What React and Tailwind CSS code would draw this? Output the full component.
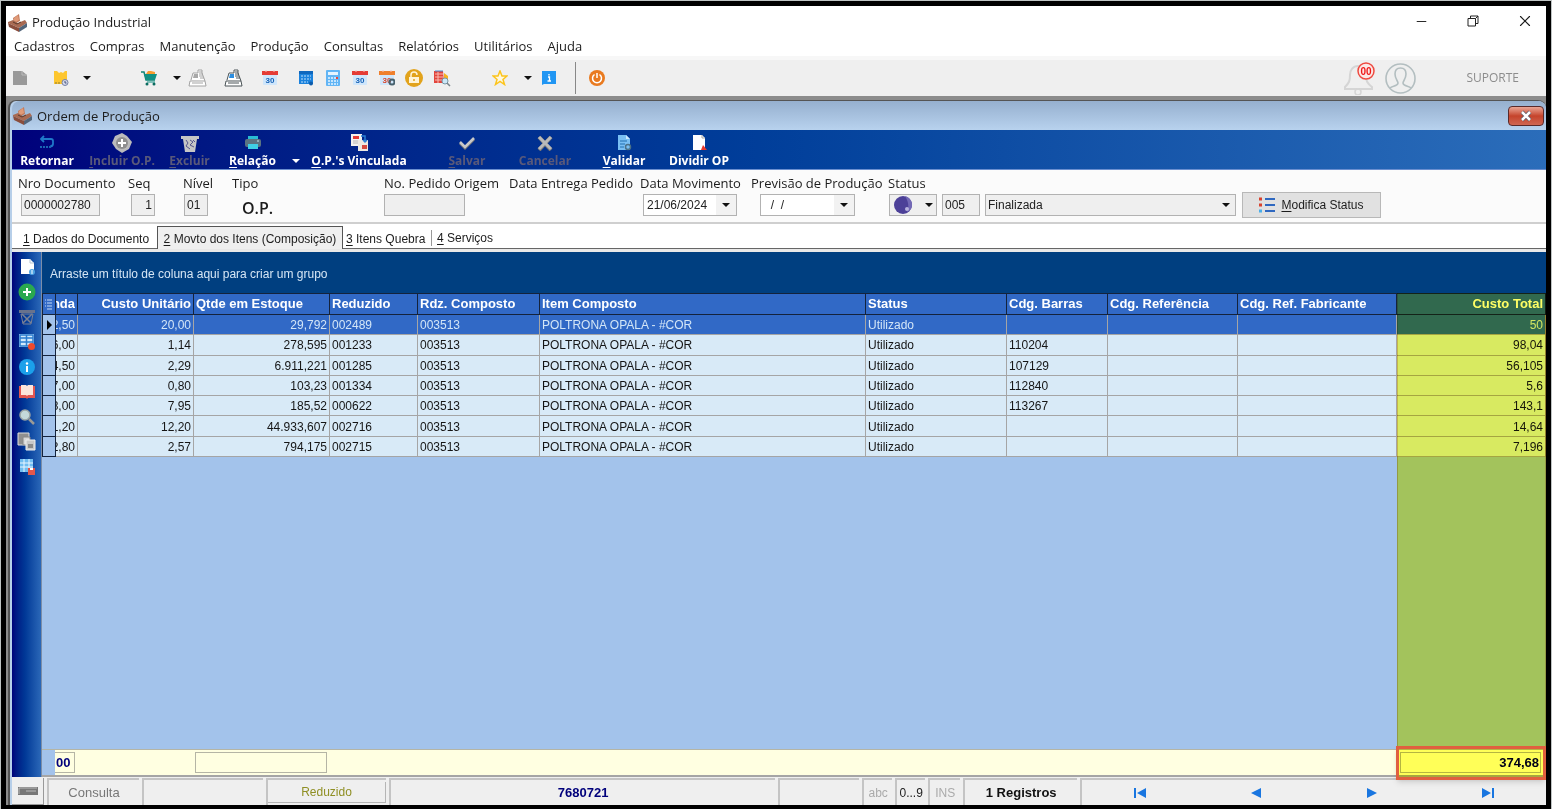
import React from 'react';
import { Minus, X } from 'lucide-react';

const columns = [
    { key: 'qtd', label: 'nda', width: 'w-[22px]', right: true, pad: 'pl-0 pr-[2px]' },
    { key: 'unit', label: 'Custo Unitário', width: 'w-[116px]', right: true },
    { key: 'stock', label: 'Qtde em Estoque', width: 'w-[136px]', right: true, labelLeft: true },
    { key: 'code', label: 'Reduzido', width: 'w-[88px]' },
    { key: 'parent', label: 'Rdz. Composto', width: 'w-[122px]' },
    { key: 'item', label: 'Item Composto', width: '' },
    { key: 'status', label: 'Status', width: 'w-[141px]' },
    { key: 'barcode', label: 'Cdg. Barras', width: 'w-[101px]' },
    { key: 'ref', label: 'Cdg. Referência', width: 'w-[130px]' },
    { key: 'maker', label: 'Cdg. Ref. Fabricante', width: 'w-[159px]' },
    { key: 'total', label: 'Custo Total', width: 'w-[149px]', right: true },
];

const base = { parent: '003513', item: 'POLTRONA OPALA - #COR', status: 'Utilizado' };

const rows = [
    { ...base, qtd: '2,50', unit: '20,00', stock: '29,792', code: '002489', total: '50' },
    { ...base, qtd: '6,00', unit: '1,14', stock: '278,595', code: '001233', barcode: '110204', total: '98,04' },
    { ...base, qtd: '4,50', unit: '2,29', stock: '6.911,221', code: '001285', barcode: '107129', total: '56,105' },
    { ...base, qtd: '7,00', unit: '0,80', stock: '103,23', code: '001334', barcode: '112840', total: '5,6' },
    { ...base, qtd: '8,00', unit: '7,95', stock: '185,52', code: '000622', barcode: '113267', total: '143,1' },
    { ...base, qtd: '1,20', unit: '12,20', stock: '44.933,607', code: '002716', total: '14,64' },
    { ...base, qtd: '2,80', unit: '2,57', stock: '794,175', code: '002715', total: '7,196' },
];

const menus = ['Cadastros', 'Compras', 'Manutenção', 'Produção', 'Consultas', 'Relatórios', 'Utilitários', 'Ajuda'];

function Svg({ size = 'w-4 h-4', box = '0 0 16 16', children }) {
    return (
        <svg className={`${size} shrink-0`} viewBox={box} fill="none" aria-hidden="true">
            {children}
        </svg>
    );
}

function Caret({ color = '#111' }) {
    return (
        <Svg size="w-2 h-2" box="0 0 8 8">
            <path d="M0 2h8L4 6z" fill={color} />
        </Svg>
    );
}

function AppIcon() {
    return (
        <Svg size="w-[19px] h-[18px]" box="0 0 19 18">
            <path d="M5 4l6-4 1 7-6 3z" fill="#c07a5c" />
            <path d="M6 4l4-3 1 5-5 3z" fill="#e09a78" />
            <path d="M0 8l5-2 5 3 7-3 2 3-8 5L0 9z" fill="#a96a52" />
            <path d="M0 9l11 5v4L1 13z" fill="#8a4d3c" />
            <path d="M11 14l8-5v4l-8 5z" fill="#52657a" />
            <path d="M5 8l4 2 4-2" stroke="#5c3a2e" />
        </Svg>
    );
}

function CalendarIcon({ top = '#e53c35', gear }) {
    return (
        <Svg size="w-4 h-4">
            <rect x="1" y="1" width="14" height="14" rx="1" fill="#cfe6fb" />
            <path d="M0 1h16v4H0z" fill={top} />
            <path d="M4 0v2M12 0v2" stroke="#f7c4be" />
            <text x="8" y="13" textAnchor="middle" fontSize="8" fontWeight="bold" fontFamily="Liberation Sans, sans-serif" fill={gear ? '#d8452c' : '#1763b8'}>30</text>
            {gear && <circle cx="13" cy="12" r="2.5" stroke="#48626e" strokeWidth="2" />}
        </Svg>
    );
}

function ScannerIcon({ line, fill }) {
    return (
        <Svg size="w-[19px] h-[18px]" box="0 0 19 18">
            <path d="M3 11L5 4h5V1h4v3l3 8" fill="#fff" stroke={line} />
            <path d="M6 5h4v4H5z" fill={fill} />
            <path d="M11 3h3M11 5h4M11 7h4M12 9h4" stroke={line} />
            <path d="M2 12h15l1 5H1z" fill="#fff" stroke={line} />
            <path d="M4 14h11" stroke={line} />
        </Svg>
    );
}

const mainTools = [
    {
        name: 'Documento', place: 'w-4',
        icon: <Svg><path d="M1 1h9l5 4v10H1z" fill="#999" /><path d="M10 1v4h5" stroke="#bbb" /></Svg>,
    },
    {
        name: 'Cadastro rápido', place: 'ml-[25px] w-4',
        icon: (
            <Svg>
                <path d="M1 1h3l2 2 2-1 2 1 2-2h2v13H1z" fill="#fdc62f" />
                <path d="M3 12v2M6 12v2" stroke="#8d7a35" />
                <circle cx="12" cy="12.500" r="3" fill="#d4d9ea" stroke="#7781a5" />
                <path d="M12 11v2h1.500" stroke="#47527d" />
            </Svg>
        ),
    },
    { name: 'Mais cadastros', place: 'ml-[14px] w-2', icon: <Caret /> },
    {
        name: 'Compras', place: 'ml-[50px] w-4',
        icon: (
            <Svg>
                <path d="M5 4l2-3h3l4 1v3H6z" fill="#f79b2e" />
                <path d="M0 2h3l2 8h9" stroke="#0e8577" strokeWidth="1.500" />
                <path d="M3 4h13l-2 6H5z" fill="#119184" />
                <path d="M6 12h8" stroke="#119184" />
                <circle cx="6" cy="14" r="1.500" fill="#0b6b60" /><circle cx="13" cy="14" r="1.500" fill="#0b6b60" />
            </Svg>
        ),
    },
    { name: 'Mais compras', place: 'ml-[16px] w-2', icon: <Caret /> },
    { name: 'Leitor', place: 'ml-[7px] w-[19px]', icon: <ScannerIcon line="#a3a3a3" fill="#a9a9a9" /> },
    { name: 'Leitor ativo', place: 'ml-[17px] w-[19px]', icon: <ScannerIcon line="#4c5558" fill="#2b8de0" /> },
    { name: 'Agenda', place: 'ml-[19px] w-4', icon: <CalendarIcon /> },
    {
        name: 'Programação', place: 'ml-[20px] w-4',
        icon: (
            <Svg>
                <path d="M1 1h14v13H1z" fill="#1b82dd" />
                <path d="M1 1h14v3H1z" fill="#0f67bd" />
                <path d="M3 6h10M3 9h10M3 12h7" stroke="#bfe0fb" strokeDasharray="2 1" />
                <circle cx="13" cy="13.500" r="2" fill="#0d5cab" />
            </Svg>
        ),
    },
    {
        name: 'Calculadora', place: 'ml-[11px] w-4',
        icon: (
            <Svg>
                <rect x="1" width="14" height="16" rx="1" fill="#62b5f5" />
                <path d="M3 2h10v3H3z" fill="#e5f4ff" />
                <path d="M3 8h10M3 11h10M3 14h10" stroke="#e5f4ff" strokeWidth="1.500" strokeDasharray="2 1" />
                <path d="M12 7v2" stroke="#e7483d" strokeWidth="2" />
            </Svg>
        ),
    },
    { name: 'Calendário', place: 'ml-[11px] w-4', icon: <CalendarIcon /> },
    { name: 'Configurar calendário', place: 'ml-[11px] w-4', icon: <CalendarIcon top="#ef7f2c" gear /> },
    {
        name: 'Bloqueio', place: 'ml-[10px] w-[18px]',
        icon: (
            <Svg size="w-[18px] h-[18px]" box="0 0 18 18">
                <circle cx="9" cy="9" r="9" fill="#e2a31c" />
                <path d="M4 8h10v6H4z" fill="#fff4d6" />
                <path d="M6 8V6a3 3 0 0 1 6 0" stroke="#fff4d6" strokeWidth="1.500" />
                <path d="M9 10v2" stroke="#e2a31c" strokeWidth="1.500" />
            </Svg>
        ),
    },
    {
        name: 'Pesquisar lista', place: 'ml-[11px] w-[17px]',
        icon: (
            <Svg size="w-[17px] h-[17px]" box="0 0 17 17">
                <path d="M0 1h9l1 12H0z" fill="#e2443c" />
                <path d="M1 1h8" stroke="#4a8ed2" />
                <path d="M1 4h8M1 7h8M1 10h8M4 2v11" stroke="#f9b9b0" />
                <path d="M10 3l4 3v4h-4z" fill="#f6b320" />
                <circle cx="11" cy="11" r="3" fill="#cbe7f7" stroke="#7895a5" />
                <path d="M13 13l3 3" stroke="#79838a" strokeWidth="1.500" />
            </Svg>
        ),
    },
    {
        name: 'Favoritos', place: 'ml-[41px] w-4',
        icon: <Svg><path d="M8 1l2 5h5l-4 3.500 1.500 5L8 11.500 3.500 14.500 5 9.500 1 6h5z" stroke="#fcc41c" strokeWidth="1.500" fill="#fff8df" /></Svg>,
    },
    { name: 'Mais favoritos', place: 'ml-[16px] w-2', icon: <Caret /> },
    {
        name: 'Informações', place: 'ml-[9px] w-4',
        icon: <Svg><path d="M1 1h14v13H3l-2 1z" fill="#2196f3" /><path d="M8 4v1.500M7 7h1.500v4M6.500 11h3.500" stroke="#fff" strokeWidth="1.300" /></Svg>,
    },
];

const orderTools = [
    {
        label: 'Retornar', place: 'w-[70px]',
        icon: <Svg><path d="M5 1L2 4l3 3M2 4h10a2 2 0 0 1 2 2v3a3 3 0 0 1-3 2.500" stroke="#1f79c9" strokeWidth="1.800" /><path d="M1 12h11" stroke="#1a66b4" strokeWidth="2" strokeDasharray="2 1" /></Svg>,
    },
    {
        label: 'Incluir O.P.', hot: true, off: true, place: 'w-[80px]',
        icon: <Svg size="w-5 h-5" box="0 0 20 20"><path d="M10 0l5 3 5 6-3 7-7 4-6-4-4-6 3-7z" fill="#bcbcbc" /><circle cx="10" cy="10" r="6" fill="#8f8f8f" /><path d="M10 6v8M6 10h8" stroke="#fff" strokeWidth="2" /></Svg>,
    },
    {
        label: 'Excluir', hot: true, off: true, place: 'w-[55px]',
        icon: <Svg size="w-[18px] h-[17px]" box="0 0 18 17"><path d="M0 1h18v3H0zM2 4h14l-2 13H4z" fill="#c6c6c6" /><path d="M5 5l2 3-2 3 4 3M9 5l3 2-3 3 4 2M12 5l2 2" stroke="#55558c" /></Svg>,
    },
    {
        label: 'Relação', hot: true, place: 'w-[71px]',
        icon: <Svg><path d="M3 1h10v4H3z" fill="#29bcd4" /><rect y="4" width="16" height="8" rx="2" fill="#5b7482" /><path d="M3 9h10v5H3z" fill="#3fd0e6" /><path d="M12 6h2" stroke="#c7e8ef" /></Svg>,
    },
    { label: '', name: 'Opções de relação', place: 'w-[16px]', icon: null },
    {
        label: "O.P.'s Vinculada", hot: true, place: 'w-[110px]',
        icon: (
            <Svg size="w-[19px] h-[18px]" box="0 0 19 18">
                <path d="M1 0h11v12H1z" fill="#f3f1ef" /><path d="M3 2h6v3H3z" fill="#e53b36" /><path d="M3 7h5M3 9h5" stroke="#b4b4b4" />
                <path d="M8 6h10v11H8z" fill="#ece8e2" /><path d="M12 11h5v4h-5z" fill="#d34a40" /><path d="M11 2h4v6M13 6l2 2 2-2" stroke="#2b7fd4" strokeWidth="1.500" />
            </Svg>
        ),
    },
    {
        label: 'Salvar', hot: true, off: true, place: 'ml-[18px] w-[70px]',
        icon: <Svg><path d="M1 8l5 5 9-9" stroke="#777" strokeWidth="3" /><path d="M1 7l5 5 9-9" stroke="#c9c9c9" strokeWidth="2.500" /></Svg>,
    },
    {
        label: 'Cancelar', off: true, place: 'w-[86px]',
        icon: <Svg><path d="M2 2l12 13M14 2L2 15" stroke="#777" strokeWidth="4" /><path d="M2 2l12 12M14 2L2 14" stroke="#bababa" strokeWidth="3" /></Svg>,
    },
    {
        label: 'Validar', hot: true, place: 'w-[72px]',
        icon: <Svg><path d="M2 0h8l4 4v11H2z" fill="#79bff3" /><path d="M10 0v4h4" fill="#c9e8ff" /><path d="M4 6h7M4 9h5M4 12h4" stroke="#236fae" /><circle cx="12" cy="12" r="2.500" stroke="#4b7187" strokeWidth="1.500" /></Svg>,
    },
    {
        label: 'Dividir OP', place: 'w-[78px]',
        icon: <Svg><path d="M2 0h9l3 3v12H2z" fill="#fff" /><path d="M11 0v3h3" stroke="#aaa" /><path d="M12 10l4 5h-6z" fill="#e8392f" /></Svg>,
    },
];

const sideTools = [
    { name: 'Novo', icon: <Svg><path d="M2 0h9l4 4v11H2z" fill="#fff" /><path d="M11 0v4h4" stroke="#b7c4d2" /><circle cx="13" cy="13" r="3" fill="#4ea3e3" /><path d="M13 11v4" stroke="#fff" /></Svg> },
    { name: 'Adicionar', icon: <Svg size="w-[18px] h-[18px]" box="0 0 18 18"><circle cx="9" cy="9" r="8.500" fill="#2aa84f" /><path d="M9 5v8M5 9h8" stroke="#fff" strokeWidth="2" /></Svg> },
    { name: 'Remover', icon: <Svg><path d="M0 1h16v3H0z" fill="#68728c" /><path d="M2 5h12l-2 10H4z" stroke="#7a8194" /><path d="M3 5l9 9M13 5l-9 9" stroke="#7a8194" strokeWidth="1.500" /></Svg> },
    { name: 'Excluir coluna', icon: <Svg><path d="M0 0h15v13H0z" fill="#d3eafb" /><path d="M1 1h13v11H1zM1 4h13M1 8h13M7.500 1v11" stroke="#2b7ed0" strokeWidth="1.500" /><circle cx="12.500" cy="12.500" r="3.500" fill="#ee4a2c" /></Svg> },
    { name: 'Informação', icon: <Svg><circle cx="8" cy="8" r="8" fill="#1ba0ea" /><circle cx="8" cy="4.500" r="1.200" fill="#fff" /><path d="M8 7v6" stroke="#fff" strokeWidth="2" /></Svg> },
    { name: 'Catálogo', icon: <Svg><path d="M0 2h16v12H9l-1 1-1-1H0z" fill="#e25550" /><path d="M2 1h5l1 1 1-1h5v10H9l-1 1-1-1H2z" fill="#fbe5dc" /></Svg> },
    { name: 'Localizar', icon: <Svg><circle cx="6" cy="6" r="5" fill="#c4d8da" stroke="#9aa3a4" strokeWidth="1.500" /><path d="M10 10l5 5" stroke="#9a9a96" strokeWidth="2.500" /></Svg> },
    { name: 'Copiar', icon: <Svg size="w-[19px] h-[19px]" box="0 0 19 19"><path d="M1 1h11v12H1z" fill="#8f8f8f" stroke="#ddd" /><path d="M6 5h7v8H6z" fill="#d7d7d7" stroke="#888" /><path d="M9 8h9v10H9z" fill="#c8c8c8" stroke="#eee" /><path d="M11 12h5v4h-5z" fill="#8b8b8b" /></Svg> },
    { name: 'Salvar grade', icon: <Svg><path d="M1 0h13v13H1z" fill="#6fbdf1" /><path d="M1 4h13M1 8h13M5 0v13M10 0v13" stroke="#e9f6ff" /><path d="M9 9h7v7H9z" fill="#e2574b" /><path d="M11 9h3v2h-3z" fill="#fff" /></Svg> },
];

// underlines the first letter as the keyboard shortcut
function Hot({ text }) {
    return <><u className="underline-offset-2">{text[0]}</u>{text.slice(1)}</>;
}

function TopBar() {
    return (
        <header>
            <div className="flex h-[30px] items-center bg-white">
                <div className="flex items-center gap-[5px] pl-[2px] pt-[3px]">
                    <AppIcon />
                    <h1 className="text-[13px]">Produção Industrial</h1>
                </div>
                <div className="ml-auto flex items-center gap-[34px] pr-[12px]">
                    <button aria-label="Minimizar" className="w-[18px] flex justify-center"><Minus size={15} strokeWidth={1.5} /></button>
                    <button aria-label="Restaurar" className="w-[18px] flex justify-center">
                        <Svg size="w-3 h-3" box="0 0 12 12"><path d="M1 3.500h7.500V11H1zM3.500 3V1H11v7.500H9M8.500 3.500L11 1" stroke="#222" /></Svg>
                    </button>
                    <button aria-label="Fechar" className="w-[18px] flex justify-center"><X size={18} strokeWidth={1.5} /></button>
                </div>
            </div>
            <nav className="flex h-5 items-start gap-[15px] bg-white pl-2 text-[13px] leading-5">
                {menus.map((menu) => <button key={menu}>{menu}</button>)}
            </nav>
            <div className="h-1 bg-[#f7f7f7]" />
            <div className="flex h-9 items-center bg-[#efefef] pl-[6px]">
                {mainTools.map((tool) => (
                    <button key={tool.name} aria-label={tool.name} className={`${tool.place} flex shrink-0 justify-center`}>
                        {tool.icon}
                    </button>
                ))}
                <div className="ml-[18px] h-8 w-px bg-[#888]" />
                <button aria-label="Sair" className="ml-[13px]">
                    <Svg><circle cx="8" cy="8" r="8" fill="#e97a1f" /><path d="M5.500 4.500a4.500 4.500 0 1 0 5 0M8 3v5" stroke="#fff" strokeWidth="1.500" /></Svg>
                </button>
                <button aria-label="Notificações" className="ml-auto">
                    <Svg size="w-8 h-[34px]" box="0 0 32 34">
                        <path d="M1 26c4-4 5-6 5-12 0-5 3-9 8-9s8 4 8 9c0 6 1 8 6 12v2H1z" stroke="#d5d5d5" strokeWidth="2" />
                        <circle cx="14" cy="31" r="3" stroke="#d5d5d5" strokeWidth="1.500" />
                        <circle cx="22" cy="10" r="8" fill="#fbe9e7" stroke="#ee4a40" strokeWidth="1.500" />
                        <text x="22" y="14" textAnchor="middle" fontSize="10" fontWeight="bold" fontFamily="Liberation Sans, sans-serif" fill="#f01818">00</text>
                    </Svg>
                </button>
                <button aria-label="Usuário" className="ml-[9px]">
                    <Svg size="w-[31px] h-[31px]" box="0 0 31 31">
                        <circle cx="15.500" cy="15.500" r="14.500" stroke="#b3bec0" strokeWidth="1.600" />
                        <path d="M5 25c2-2 8-2 8-5 0-2-3-4-3-9 0-4 2-6 5.500-6S21 7 21 11c0 5-3 7-3 9 0 3 6 3 8 5" stroke="#b3bec0" strokeWidth="1.600" />
                    </Svg>
                </button>
                <span className="ml-[50px] mr-[27px] text-[12px] text-[#8c8c8c]">SUPORTE</span>
            </div>
        </header>
    );
}

function OrderToolbar() {
    return (
        <div className="flex h-10 items-end border-b border-[#6b8fd0] bg-linear-to-r from-[#00007b] to-[#2b6dba] text-[12px] font-bold text-white">
            {orderTools.map((tool) => (
                <button
                    key={tool.label || tool.name}
                    aria-label={tool.name}
                    disabled={tool.off}
                    className={`${tool.place} ${tool.off ? 'text-[#59597a]' : ''} flex h-[38px] shrink-0 flex-col items-center justify-end whitespace-nowrap`}
                >
                    <span className="flex h-[18px] items-center">{tool.icon}</span>
                    <span className="flex h-[17px] items-center leading-4">
                        {tool.label ? <span>{tool.hot ? <Hot text={tool.label} /> : tool.label}</span> : <Caret color="#fff" />}
                    </span>
                </button>
            ))}
        </div>
    );
}

const box = 'h-[22px] border border-[#b2b2b2] bg-[#efefef] font-["Liberation_Sans",Arial,sans-serif] text-[12px] text-[#222]';

function Field({ id, label, place, children }) {
    return (
        <div className={`${place} shrink-0`}>
            <label htmlFor={id} className="block h-[22px] whitespace-nowrap leading-[22px]">{label}</label>
            {children}
        </div>
    );
}

function DateBox({ id, value, place }) {
    return (
        <div className={`${place} ${box} flex bg-white`}>
            <input id={id} defaultValue={value} className="min-w-0 flex-1 bg-white pl-[3px] outline-none" />
            <button aria-label="Abrir calendário" className="flex w-5 items-center justify-center bg-[#f2f2f2]"><Caret /></button>
        </div>
    );
}

function OrderForm() {
    return (
        <div className="flex h-[54px] items-start border-b-2 border-[#cfcfcf] bg-[#fbfbfb] pl-[6px] pt-[2px] text-[13px]">
            <Field id="doc" label="Nro Documento" place="w-[110px]">
                <input id="doc" readOnly defaultValue="0000002780" className={`${box} ml-[3px] w-[79px] px-[2px]`} />
            </Field>
            <Field id="seq" label="Seq" place="w-[55px]">
                <input id="seq" readOnly defaultValue="1" className={`${box} ml-[3px] w-6 px-[2px] text-right`} />
            </Field>
            <Field id="nivel" label="Nível" place="w-[49px]">
                <input id="nivel" readOnly defaultValue="01" className={`${box} ml-[1px] w-6 px-[2px]`} />
            </Field>
            <div className="w-[152px] shrink-0">
                <div className="h-[22px] leading-[22px]">Tipo</div>
                <div className="pl-[10px] pt-[2px] text-[16px] font-semibold">O.P.</div>
            </div>
            <Field id="pedido" label="No. Pedido Origem" place="w-[125px]">
                <input id="pedido" readOnly className={`${box} w-[81px] px-[2px]`} />
            </Field>
            <div className="w-[131px] shrink-0 whitespace-nowrap leading-[22px]">Data Entrega Pedido</div>
            <Field id="movto" label="Data Movimento" place="w-[111px]">
                <DateBox id="movto" value="21/06/2024" place="ml-[3px] w-[94px]" />
            </Field>
            <Field id="previsao" label="Previsão de Produção" place="w-[137px]">
                <DateBox id="previsao" value="  /  /" place="ml-[9px] w-[95px] whitespace-pre" />
            </Field>
            <Field id="status" label="Status" place="">
                <div className="flex items-start pl-px">
                    <button aria-label="Cor do status" className={`${box} flex w-12 items-center justify-between px-[3px]`}>
                        <Svg size="w-5 h-5" box="0 0 20 20">
                            <circle cx="10" cy="10" r="9" fill="#4c4098" />
                            <path d="M12 1a9 9 0 0 1 6 13l-4 4c2-5 2-11-2-17z" fill="#7268b5" />
                            <circle cx="14" cy="14" r="2" fill="#b7b1de" />
                        </Svg>
                        <Caret />
                    </button>
                    <input aria-label="Código do status" readOnly defaultValue="005" className={`${box} ml-[5px] w-[38px] px-[2px]`} />
                    <div className="relative ml-[5px]">
                        <select id="status" className={`${box} w-[251px] appearance-none px-[2px]`}>
                            <option>Finalizada</option>
                        </select>
                        <span className="pointer-events-none absolute right-[6px] top-[7px]"><Caret /></span>
                    </div>
                    <button className='-mt-[2px] ml-[6px] flex h-[26px] w-[139px] items-center justify-center gap-[6px] border border-[#b8b8b8] bg-[#e1e1e1] font-["Liberation_Sans",Arial,sans-serif] text-[12px]'>
                        <Svg>
                            <path d="M0 2h3M0 8h3" stroke="#d8422e" strokeWidth="3" />
                            <path d="M0 14h3" stroke="#49aeea" strokeWidth="3" />
                            <path d="M6 2h10M6 8h10M6 14h10" stroke="#2f68c0" strokeWidth="2" />
                        </Svg>
                        <span><Hot text="Modifica Status" /></span>
                    </button>
                </div>
            </Field>
        </div>
    );
}

function Tabs() {
    return (
        <div role="tablist" className="flex h-[25px] items-end border-b border-[#666] bg-white pl-[11px] text-[12px]">
            <button role="tab" className="h-5 w-[134px] whitespace-nowrap pt-[2px] text-left"><Hot text="1 Dados do Documento" /></button>
            <button role="tab" aria-selected="true" className="-mb-px h-[23px] w-[186px] whitespace-nowrap border border-b-0 border-[#555] bg-[#efefef] pt-[2px]">
                <Hot text="2 Movto dos Itens (Composição)" />
            </button>
            <button role="tab" className="h-5 w-[88px] whitespace-nowrap pl-[3px] pt-[2px] text-left"><Hot text="3 Itens Quebra" /></button>
            <button role="tab" className="mb-[2px] h-[16px] whitespace-nowrap border-l border-[#999] pl-[5px] leading-4"><Hot text="4 Serviços" /></button>
        </div>
    );
}

function Grid() {
    return (
        <div className="relative flex min-w-0 flex-1 flex-col bg-[#a3c3eb]">
            <div className="flex h-[41px] items-center bg-[#003f80] pl-[8px] pt-[2px] text-[12px] text-[#d5e6f5]">
                Arraste um título de coluna aqui para criar um grupo
            </div>
            <table className="h-[164px] w-full table-fixed border-collapse text-[12px]">
                <thead>
                    <tr className="h-[21px] bg-[#3169c6] text-[13px] text-white">
                        <th className="w-[13px] border border-[#14233c] p-0">
                            <Svg size="w-3 h-3" box="0 0 12 12"><path d="M4 2h5M4 5h5M4 8h5M4 11h5M2 2h1M2 5h1M2 8h1" stroke="#c6dcf5" /></Svg>
                        </th>
                        {columns.map((col) => (
                            <th key={col.key} className={`${col.width} ${col.pad || 'px-[2px]'} border border-[#14233c] py-0 font-bold`}>
                                <div className={`flex overflow-hidden whitespace-nowrap leading-4 ${col.right && !col.labelLeft ? 'justify-end' : ''}`}>{col.label}</div>
                            </th>
                        ))}
                    </tr>
                </thead>
                <tbody>
                    {rows.map((row, index) => (
                        <tr key={row.code} className={index === 0 ? 'bg-[#3169c6] text-[#d3e6f7]' : 'bg-[#d8eaf7] text-[#151515]'}>
                            <td className="border border-[#14233c] bg-[#a3c3eb] p-0">
                                {index === 0 && <Svg size="w-3 h-3" box="0 0 12 12"><path d="M4 1l5 5-5 5z" fill="#000" /></Svg>}
                            </td>
                            {columns.map((col) => (
                                <td key={col.key} className={`${col.pad || 'px-[2px]'} border border-[#a5a5a5] pb-0 pt-px`}>
                                    <div className={`flex overflow-hidden whitespace-nowrap leading-4 ${col.right ? 'justify-end' : ''}`}>{row[col.key]}</div>
                                </td>
                            ))}
                        </tr>
                    ))}
                </tbody>
            </table>
            <div className="mt-auto flex h-[28px] items-center border-b-2 border-t border-b-[#a5a5a5] border-t-[#b5b5a5] bg-[#ffffe1] text-[13px] font-bold">
                <div className="h-full w-[13px] bg-[#a3c3eb]" />
                <div className="h-[21px] w-[20px] border border-l-0 border-[#b5b5a5] pl-px leading-5 text-[#00007b]">00</div>
                <div className="ml-[120px] h-[21px] w-[132px] border border-[#b5b5a5]" />
                <div className="ml-auto mr-[5px] h-[21px] w-[141px] border border-[#b5b5a5] pr-px text-right leading-5 text-[#00003c]">374,68</div>
            </div>
            {/* highlighted cost column */}
            <div className="pointer-events-none absolute bottom-0 right-0 top-[41px] w-[149px] border-x border-[#e8c84a] bg-[#ffff64] mix-blend-multiply" />
            <div className="pointer-events-none absolute -bottom-[3px] right-0 h-[34px] w-[150px] border-[3px] border-[#e0603f] shadow-md" />
        </div>
    );
}

const navButtons = [
    { name: 'Primeiro', path: 'M1 1h2v10H1zM13 1v10L4 6z' },
    { name: 'Anterior', path: 'M12 1v10L2 6z' },
    { name: 'Próximo', path: 'M2 1v10l10-5z' },
    { name: 'Último', path: 'M1 1v10l9-5zM11 1h2v10h-2z' },
];

const well = 'flex items-center justify-center border-l-2 border-t-2 border-[#c4c4c4] shrink-0';

function StatusBar() {
    return (
        <footer className="flex h-[28px] gap-[3px] bg-[#efefef] pt-px text-[12px] text-[#777]">
            <div className="flex w-[32px] shrink-0 items-center justify-center border-b border-r border-[#999]">
                <Svg size="w-5 h-2" box="0 0 20 8"><path d="M0 0h20v8H0z" fill="#777" /><path d="M1 7V1h18M8 4h10" stroke="#bbb" /></Svg>
            </div>
            <div className={`${well} w-[92px] text-[13px]`}>Consulta</div>
            <div className={`${well} w-[121px]`} />
            <div className={`${well} w-[120px]`}>
                <span className="flex h-[21px] w-full items-center justify-center border-b border-r border-[#b5b5b5] text-[#8f8f24]">Reduzido</span>
            </div>
            <div className={`${well} min-w-0 flex-[386_1_0] text-[13px] font-bold text-[#00007b]`}>7680721</div>
            <div className={`${well} w-[81px]`} />
            <div className={`${well} w-[30px] text-[#aaa]`}>abc</div>
            <div className={`${well} w-[30px] text-[#222]`}>0...9</div>
            <div className={`${well} w-[32px] text-[#aaa]`}>INS</div>
            <div className={`${well} w-[114px] text-[13px] font-bold text-[#111]`}>1 Registros</div>
            <div className={`${well} flex-[466_1_0]`}>
                {navButtons.map((nav) => (
                    <button key={nav.name} aria-label={nav.name} className="flex flex-1 justify-center">
                        <Svg size="w-[14px] h-3" box="0 0 14 12"><path d={nav.path} fill="#1976e0" /></Svg>
                    </button>
                ))}
            </div>
        </footer>
    );
}

export default function App() {
    return (
        <div className='flex min-h-screen flex-col border-x border-t border-[#bfc4c4] bg-black px-[5px] pb-[4px] pt-[5px] font-["Open_Sans","Noto_Sans",sans-serif] text-[#1c1c1c]'>
            <TopBar />
            <div className="flex flex-1 flex-col border-t-4 border-[#8c8c8c] bg-[#8c8c8c]">
                <main className="ml-[2px] flex flex-1 flex-col rounded-t-lg border-l-2 border-t border-[#555] bg-[#b7cfe9] pl-[2px]">
                    <div className="flex h-[29px] items-center gap-[5px] rounded-t-lg bg-linear-to-b from-[#96b0cf] to-[#b8d2ee] pl-px pr-[2px]">
                        <AppIcon />
                        <h2 className="pt-[2px] text-[13px]">Ordem de Produção</h2>
                        <button aria-label="Fechar janela" className="ml-auto flex h-5 w-[36px] items-center justify-center rounded-sm border border-[#5a2a2a] bg-linear-to-b from-[#e9a595] via-[#c5432b] to-[#cf6652]">
                            <Svg size="w-3 h-3" box="0 0 12 12"><path d="M2 2l8 8M10 2l-8 8" stroke="#5c5c68" strokeWidth="4" /><path d="M2 2l8 8M10 2l-8 8" stroke="#fff" strokeWidth="2.500" /></Svg>
                        </button>
                    </div>
                    <OrderToolbar />
                    <OrderForm />
                    <div className='flex flex-1 flex-col font-["Liberation_Sans",Arial,sans-serif]'>
                        <Tabs />
                        <div className="flex flex-1 border-t-[3px] border-[#e8e8e8]">
                            <aside className="flex w-[30px] shrink-0 flex-col items-center border-r border-[#7c8ea8] bg-linear-to-r from-[#00007b] to-[#2b68b8] pt-[2px]">
                                {sideTools.map((tool) => (
                                    <button key={tool.name} aria-label={tool.name} className="flex h-[25px] items-center">{tool.icon}</button>
                                ))}
                            </aside>
                            <Grid />
                        </div>
                        <StatusBar />
                    </div>
                </main>
            </div>
        </div>
    );
}
